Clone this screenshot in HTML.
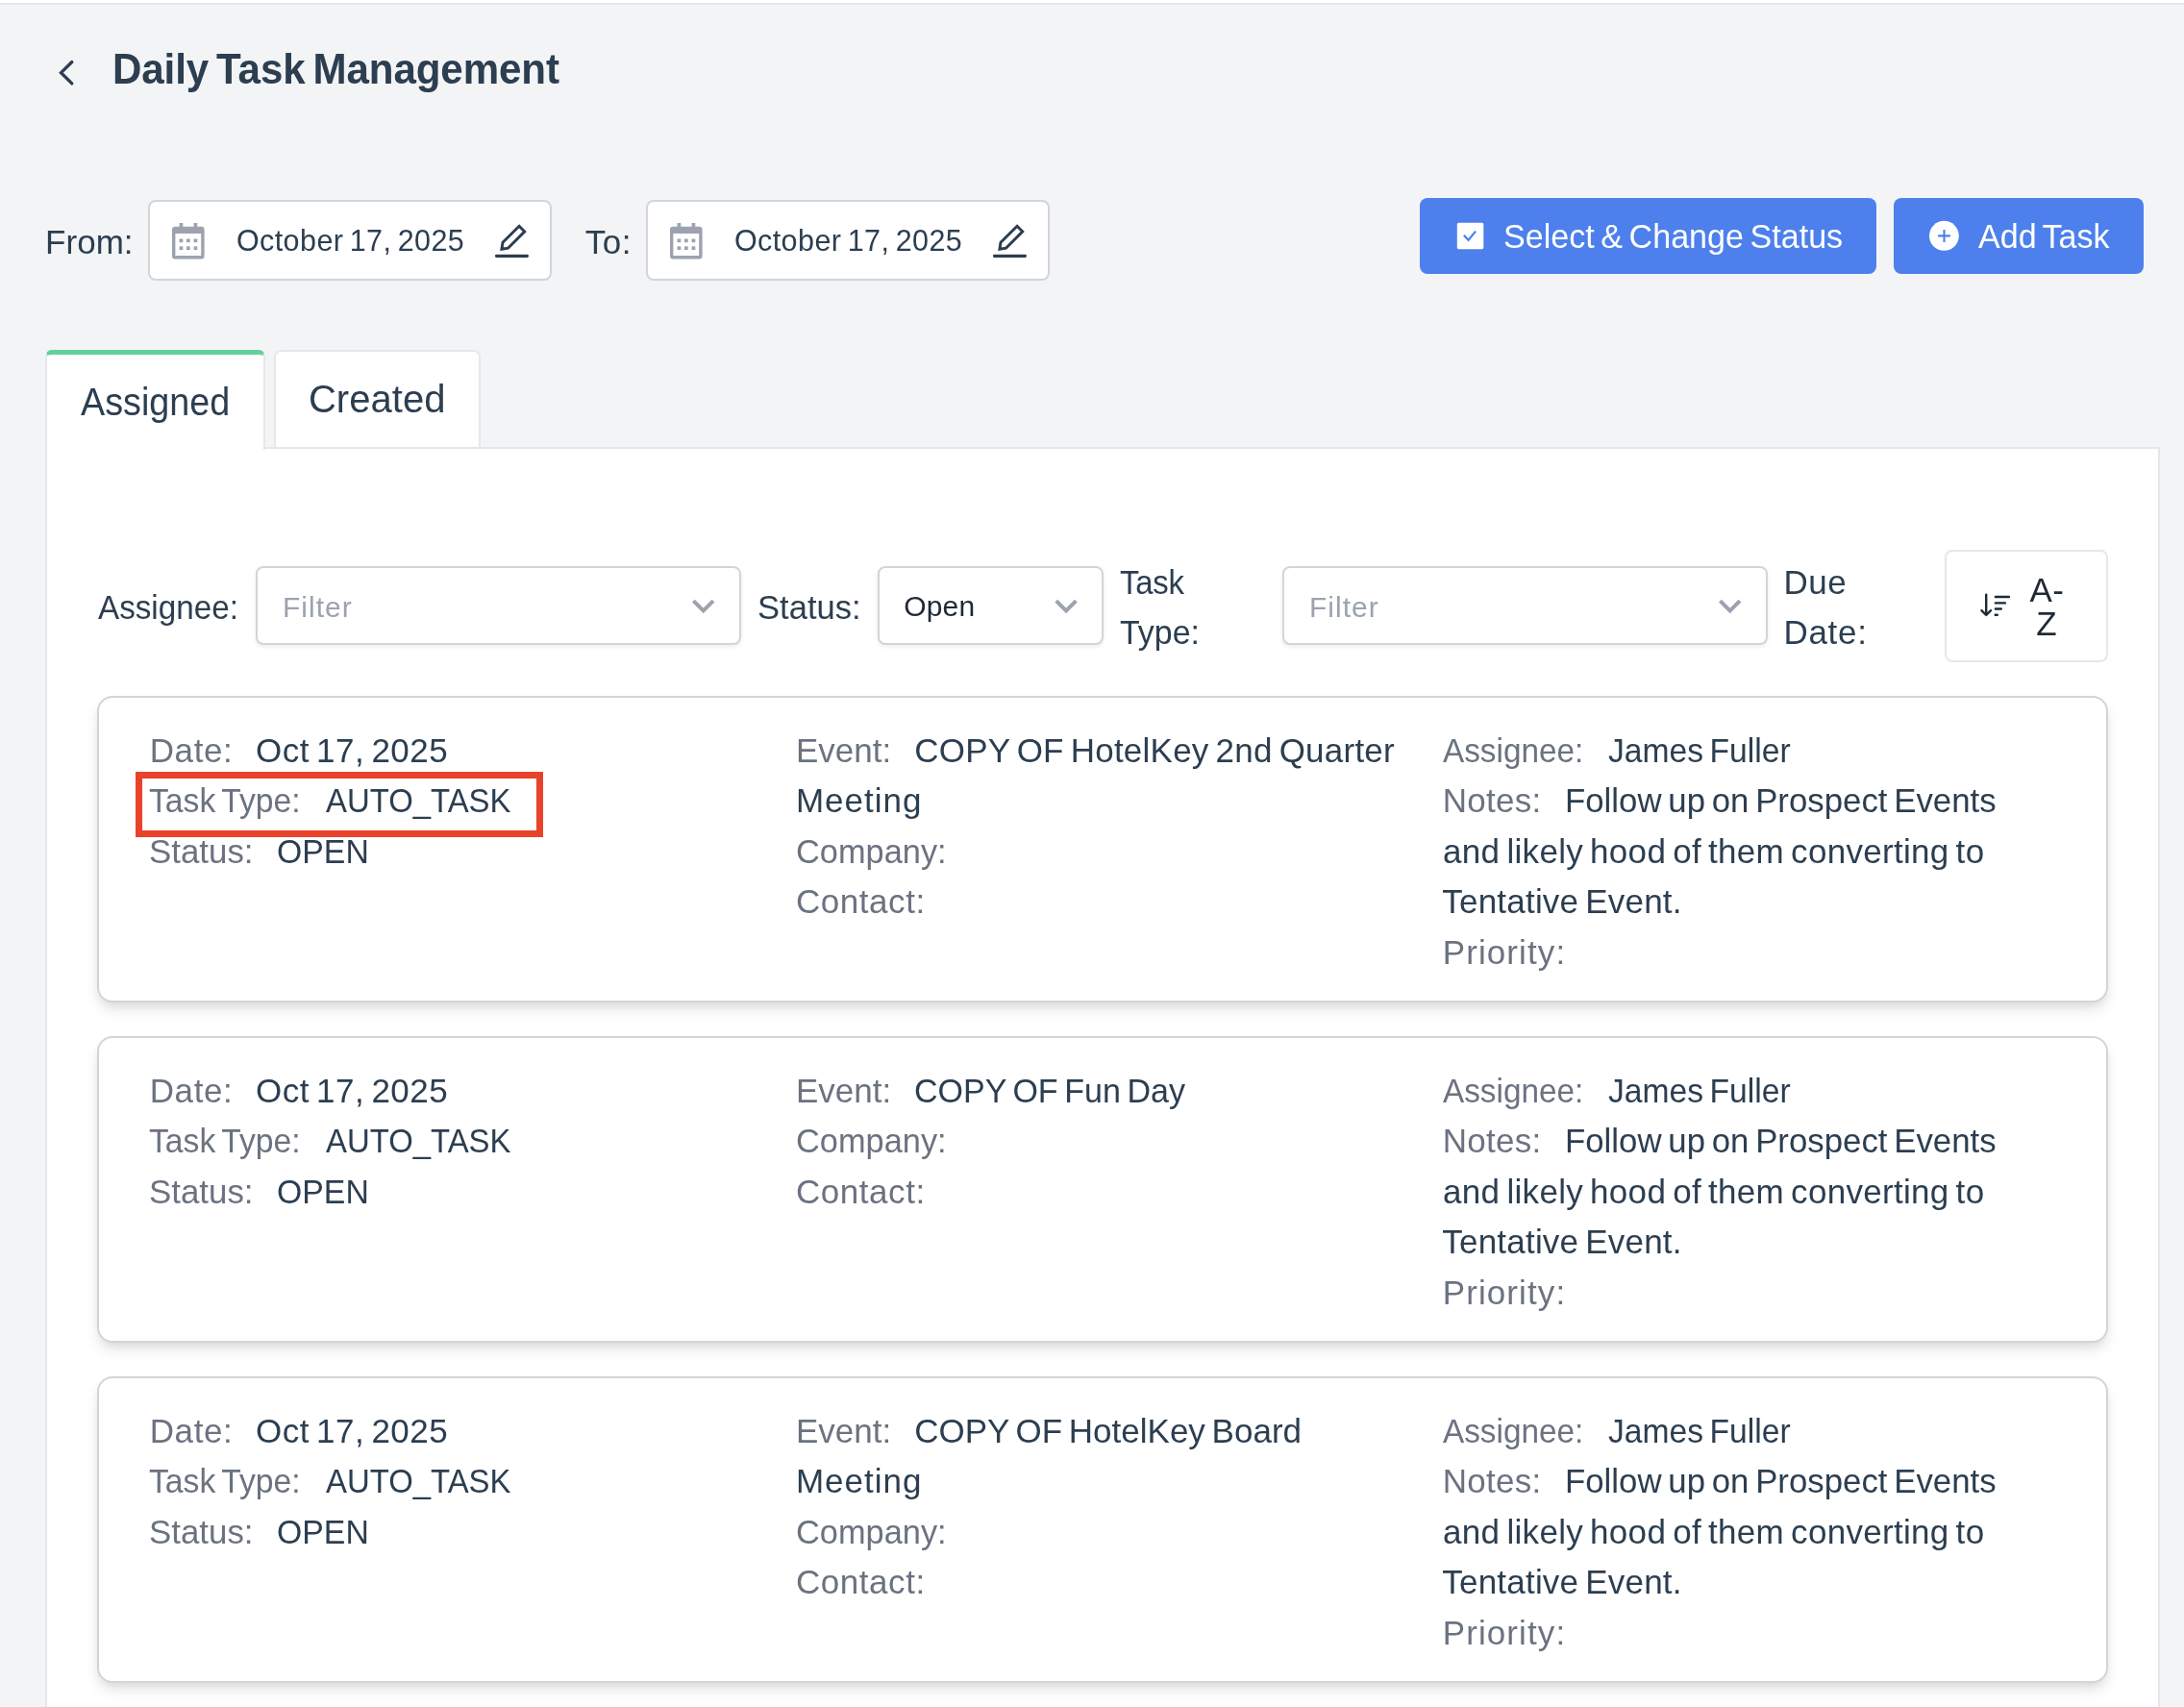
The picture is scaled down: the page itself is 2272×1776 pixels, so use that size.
<!DOCTYPE html>
<html lang="en"><head><meta charset="utf-8"><title>Daily Task Management</title>
<style>
html,body{margin:0;padding:0;overflow:hidden}
body{width:2272px;height:1776px;position:relative;overflow:hidden;background:#f3f4f6;font-family:"Liberation Sans", sans-serif;}
.t{position:absolute;white-space:pre;line-height:1;transform-origin:0 0;word-spacing:-0.085em;font-weight:400}
.abs{position:absolute;box-sizing:border-box}
.box{position:absolute;box-sizing:border-box;background:#fff;border:2px solid #d1d5db;border-radius:8px}
.dd{box-shadow:0 2px 4px rgba(16,24,40,.08)}
.btn{position:absolute;background:#4d80ec;border-radius:8px}
.card{position:absolute;box-sizing:border-box;left:101px;width:2092px;height:319px;background:#fff;border:2px solid #d1d5db;border-radius:16px;box-shadow:0 9px 15px -2px rgba(0,0,0,.11),0 4px 8px -2px rgba(0,0,0,.06)}
svg{position:absolute;overflow:visible}
</style></head><body>

<div class="abs" style="left:0;top:0;width:2272px;height:3px;background:#fff"></div>
<div class="abs" style="left:0;top:3px;width:2272px;height:2px;background:#e4e6e9"></div>
<svg style="left:0;top:0" width="2272" height="120"><path d="M74.8 64.5 L63.5 75.7 L74.8 86.9" fill="none" stroke="#2c3e50" stroke-width="3.3" stroke-linecap="round" stroke-linejoin="miter"/></svg>
<div class="box" style="left:154px;top:208px;width:420px;height:84px"></div>
<div class="box" style="left:672px;top:208px;width:420px;height:84px"></div>
<svg style="left:179.0px;top:231.8px" width="34" height="38" viewBox="0 0 34 38"><path fill="#9ca3af" fill-rule="evenodd" d="M3.2 3.8 H30.4 A3.2 3.2 0 0 1 33.6 7 V34.2 A3.2 3.2 0 0 1 30.4 37.4 H3.2 A3.2 3.2 0 0 1 0 34.2 V7 A3.2 3.2 0 0 1 3.2 3.8 Z M3.4 11 V34 H30.2 V11 Z"/><rect x="7.6" y="0" width="3.7" height="5" fill="#9ca3af"/><rect x="22.6" y="0" width="3.7" height="5" fill="#9ca3af"/><rect x="7.6" y="16.5" width="3.7" height="3.7" fill="#9ca3af"/><rect x="7.6" y="24.3" width="3.7" height="3.7" fill="#9ca3af"/><rect x="15.0" y="16.5" width="3.7" height="3.7" fill="#9ca3af"/><rect x="15.0" y="24.3" width="3.7" height="3.7" fill="#9ca3af"/><rect x="22.6" y="16.5" width="3.7" height="3.7" fill="#9ca3af"/><rect x="22.6" y="24.3" width="3.7" height="3.7" fill="#9ca3af"/></svg>
<svg style="left:697.0px;top:231.8px" width="34" height="38" viewBox="0 0 34 38"><path fill="#9ca3af" fill-rule="evenodd" d="M3.2 3.8 H30.4 A3.2 3.2 0 0 1 33.6 7 V34.2 A3.2 3.2 0 0 1 30.4 37.4 H3.2 A3.2 3.2 0 0 1 0 34.2 V7 A3.2 3.2 0 0 1 3.2 3.8 Z M3.4 11 V34 H30.2 V11 Z"/><rect x="7.6" y="0" width="3.7" height="5" fill="#9ca3af"/><rect x="22.6" y="0" width="3.7" height="5" fill="#9ca3af"/><rect x="7.6" y="16.5" width="3.7" height="3.7" fill="#9ca3af"/><rect x="7.6" y="24.3" width="3.7" height="3.7" fill="#9ca3af"/><rect x="15.0" y="16.5" width="3.7" height="3.7" fill="#9ca3af"/><rect x="15.0" y="24.3" width="3.7" height="3.7" fill="#9ca3af"/><rect x="22.6" y="16.5" width="3.7" height="3.7" fill="#9ca3af"/><rect x="22.6" y="24.3" width="3.7" height="3.7" fill="#9ca3af"/></svg>
<svg style="left:0px;top:0" width="10" height="10"><path d="M540.1 235.2 L545.8 240.9 L528.6 258.1 L521.9 259.2 L523.0 252.3 Z" fill="none" stroke="#2c3e50" stroke-width="2.9" stroke-linejoin="miter" stroke-miterlimit="3"/><rect x="515.0" y="264.7" width="34.9" height="3.2" rx="1.3" fill="#2c3e50"/></svg>
<svg style="left:518px;top:0" width="10" height="10"><path d="M540.1 235.2 L545.8 240.9 L528.6 258.1 L521.9 259.2 L523.0 252.3 Z" fill="none" stroke="#2c3e50" stroke-width="2.9" stroke-linejoin="miter" stroke-miterlimit="3"/><rect x="515.0" y="264.7" width="34.9" height="3.2" rx="1.3" fill="#2c3e50"/></svg>
<div class="btn" style="left:1477px;top:206px;width:475px;height:79px"></div>
<div class="btn" style="left:1970px;top:206px;width:260px;height:79px"></div>
<svg style="left:0;top:0" width="10" height="10"><rect x="1515.8" y="231.7" width="27.5" height="27.5" rx="1.8" fill="#fff"/><path d="M1522.9 244.8 L1527.5 249.8 L1535.1 240.6" fill="none" stroke="#4d80ec" stroke-width="2.2" stroke-linejoin="miter"/><circle cx="2022.4" cy="245.3" r="15.45" fill="#fff"/><path d="M2016.1 245.4 H2028.9 M2022.5 239 V251.9" fill="none" stroke="#4d80ec" stroke-width="2.1"/></svg>
<div class="abs" style="left:47px;top:465px;width:2200px;height:1311px;background:#fff;border:2px solid #e5e7eb;border-bottom:none"></div>
<div class="abs" style="left:47px;top:364px;width:229px;height:104px;background:#fff;border-left:2px solid #e5e7eb;border-right:2px solid #e5e7eb;border-top:5px solid #66cf9b;border-radius:7px 7px 0 0"></div>
<div class="abs" style="left:285px;top:364px;width:214.5px;height:101px;background:#fff;border:2px solid #e5e7eb;border-bottom:none;border-radius:7px 7px 0 0"></div>
<div class="box dd" style="left:265.5px;top:589px;width:505px;height:82px"></div>
<svg style="left:0;top:0" width="10" height="10"><path d="M721.4000000000001 625.2 L731.7 635.4 L742.0 625.2" fill="none" stroke="#9ca3af" stroke-width="4"/></svg>
<div class="box dd" style="left:912.5px;top:589px;width:235px;height:82px"></div>
<svg style="left:0;top:0" width="10" height="10"><path d="M1098.8 625.2 L1109.1 635.4 L1119.3999999999999 625.2" fill="none" stroke="#9ca3af" stroke-width="4"/></svg>
<div class="box dd" style="left:1333.5px;top:589px;width:505px;height:82px"></div>
<svg style="left:0;top:0" width="10" height="10"><path d="M1789.4 625.2 L1799.7 635.4 L1810.0 625.2" fill="none" stroke="#9ca3af" stroke-width="4"/></svg>
<div class="abs" style="left:2023px;top:572px;width:170px;height:117px;background:#fff;border:2px solid #e5e7eb;border-radius:8px"></div>
<svg style="left:0;top:0" width="10" height="10"><g fill="none" stroke="#1f2937" stroke-width="2.4" stroke-linecap="round" stroke-linejoin="round"><path d="M2066.2 618.6 V639.8 M2061.4 635.2 L2066.2 640 L2071 635.2"/><path d="M2075.9 621 H2089.9 M2075.9 627.4 H2085.9 M2075.9 633.5 H2081.8 M2075.7 639.8 H2077.8"/></g></svg>
<div class="card" style="top:724px"></div>
<div class="card" style="top:1078px"></div>
<div class="card" style="top:1432px"></div>
<div class="abs" style="left:140.5px;top:802.5px;width:424px;height:68px;border:7px solid #e8432a"></div>
<div class="abs" style="left:0;top:0;width:2272px;height:1776px;will-change:transform">
<span class="t" style="left:117.28px;top:49px;font-size:44.8px;color:#2c3e50;letter-spacing:-0.118px;transform:scaleX(0.9400);font-weight:700">Daily Task Management</span>
<span class="t" style="left:47.10px;top:234px;font-size:35.0px;color:#2c3e50;letter-spacing:0.025px">From:</span>
<span class="t" style="left:245.90px;top:235px;font-size:30.5px;color:#2c3e50;letter-spacing:0.427px">October 17, 2025</span>
<span class="t" style="left:608.80px;top:234px;font-size:35.0px;color:#2c3e50;letter-spacing:0.450px">To:</span>
<span class="t" style="left:763.90px;top:235px;font-size:30.5px;color:#2c3e50;letter-spacing:0.427px">October 17, 2025</span>
<span class="t" style="left:1563.85px;top:228px;font-size:35.0px;color:#fff;transform:scaleX(0.9736)">Select &amp; Change Status</span>
<span class="t" style="left:2057.50px;top:228px;font-size:35.0px;color:#fff;transform:scaleX(0.9729)">Add Task</span>
<span class="t" style="left:84.40px;top:398px;font-size:40.0px;color:#2c3e50;transform:scaleX(0.9438)">Assigned</span>
<span class="t" style="left:320.90px;top:395px;font-size:40.0px;color:#2c3e50;letter-spacing:0.067px">Created</span>
<span class="t" style="left:102.00px;top:614px;font-size:35.0px;color:#2c3e50;transform:scaleX(0.9490)">Assignee:</span>
<span class="t" style="left:294.00px;top:617px;font-size:30.0px;color:#9ca3af;letter-spacing:1.020px">Filter</span>
<span class="t" style="left:787.62px;top:614px;font-size:35.0px;color:#2c3e50;transform:scaleX(0.9885)">Status:</span>
<span class="t" style="left:940.30px;top:616px;font-size:30.0px;color:#1f2937;letter-spacing:0.133px">Open</span>
<span class="t" style="left:1164.86px;top:588px;font-size:35.0px;color:#2c3e50;letter-spacing:-0.262px;transform:scaleX(0.9400)">Task</span>
<span class="t" style="left:1164.83px;top:640px;font-size:35.0px;color:#2c3e50;transform:scaleX(0.9695)">Type:</span>
<span class="t" style="left:1362.00px;top:617px;font-size:30.0px;color:#9ca3af;letter-spacing:1.020px">Filter</span>
<span class="t" style="left:1855.50px;top:588px;font-size:35.0px;color:#2c3e50;letter-spacing:0.500px">Due</span>
<span class="t" style="left:1855.50px;top:640px;font-size:35.0px;color:#2c3e50;letter-spacing:0.675px">Date:</span>
<span class="t" style="left:2111.40px;top:596px;font-size:35.0px;color:#1f2937;letter-spacing:0.400px">A-</span>
<span class="t" style="left:2118.30px;top:631px;font-size:35.0px;color:#1f2937">Z</span>
<span class="t" style="left:155.70px;top:763px;font-size:35.0px;color:#6b7280;letter-spacing:0.625px">Date:</span>
<span class="t" style="left:266.00px;top:763px;font-size:35.0px;color:#2c3e50;letter-spacing:0.473px">Oct 17, 2025</span>
<span class="t" style="left:155.14px;top:815px;font-size:35.0px;color:#6b7280;transform:scaleX(0.9631)">Task Type:</span>
<span class="t" style="left:339.20px;top:815px;font-size:35.0px;color:#2c3e50;letter-spacing:-0.021px;transform:scaleX(0.9400)">AUTO_TASK</span>
<span class="t" style="left:155.11px;top:868px;font-size:35.0px;color:#6b7280;transform:scaleX(0.9962)">Status:</span>
<span class="t" style="left:287.67px;top:868px;font-size:35.0px;color:#2c3e50;transform:scaleX(0.9663)">OPEN</span>
<span class="t" style="left:827.90px;top:763px;font-size:35.0px;color:#6b7280;transform:scaleX(0.9989)">Event:</span>
<span class="t" style="left:951.20px;top:763px;font-size:35.0px;color:#2c3e50;letter-spacing:0.233px">COPY OF HotelKey 2nd Quarter</span>
<span class="t" style="left:827.90px;top:815px;font-size:35.0px;color:#2c3e50;letter-spacing:1.000px">Meeting</span>
<span class="t" style="left:827.94px;top:868px;font-size:35.0px;color:#6b7280;transform:scaleX(0.9818)">Company:</span>
<span class="t" style="left:827.90px;top:920px;font-size:35.0px;color:#6b7280;letter-spacing:0.557px">Contact:</span>
<span class="t" style="left:1500.80px;top:763px;font-size:35.0px;color:#6b7280;transform:scaleX(0.9517)">Assignee:</span>
<span class="t" style="left:1673.14px;top:763px;font-size:35.0px;color:#2c3e50;transform:scaleX(0.9607)">James Fuller</span>
<span class="t" style="left:1500.70px;top:815px;font-size:35.0px;color:#6b7280;letter-spacing:0.300px">Notes:</span>
<span class="t" style="left:1627.62px;top:815px;font-size:35.0px;color:#2c3e50;transform:scaleX(0.9944)">Follow up on Prospect Events</span>
<span class="t" style="left:1501.10px;top:868px;font-size:35.0px;color:#2c3e50;letter-spacing:0.300px">and likely hood of them converting to</span>
<span class="t" style="left:1500.30px;top:920px;font-size:35.0px;color:#2c3e50;letter-spacing:0.207px">Tentative Event.</span>
<span class="t" style="left:1500.70px;top:973px;font-size:35.0px;color:#6b7280;letter-spacing:1.100px">Priority:</span>
<span class="t" style="left:155.70px;top:1117px;font-size:35.0px;color:#6b7280;letter-spacing:0.625px">Date:</span>
<span class="t" style="left:266.00px;top:1117px;font-size:35.0px;color:#2c3e50;letter-spacing:0.473px">Oct 17, 2025</span>
<span class="t" style="left:155.14px;top:1169px;font-size:35.0px;color:#6b7280;transform:scaleX(0.9631)">Task Type:</span>
<span class="t" style="left:339.20px;top:1169px;font-size:35.0px;color:#2c3e50;letter-spacing:-0.021px;transform:scaleX(0.9400)">AUTO_TASK</span>
<span class="t" style="left:155.11px;top:1222px;font-size:35.0px;color:#6b7280;transform:scaleX(0.9962)">Status:</span>
<span class="t" style="left:287.67px;top:1222px;font-size:35.0px;color:#2c3e50;transform:scaleX(0.9663)">OPEN</span>
<span class="t" style="left:827.90px;top:1117px;font-size:35.0px;color:#6b7280;transform:scaleX(0.9989)">Event:</span>
<span class="t" style="left:951.26px;top:1117px;font-size:35.0px;color:#2c3e50;transform:scaleX(0.9722)">COPY OF Fun Day</span>
<span class="t" style="left:827.94px;top:1169px;font-size:35.0px;color:#6b7280;transform:scaleX(0.9818)">Company:</span>
<span class="t" style="left:827.90px;top:1222px;font-size:35.0px;color:#6b7280;letter-spacing:0.557px">Contact:</span>
<span class="t" style="left:1500.80px;top:1117px;font-size:35.0px;color:#6b7280;transform:scaleX(0.9517)">Assignee:</span>
<span class="t" style="left:1673.14px;top:1117px;font-size:35.0px;color:#2c3e50;transform:scaleX(0.9607)">James Fuller</span>
<span class="t" style="left:1500.70px;top:1169px;font-size:35.0px;color:#6b7280;letter-spacing:0.300px">Notes:</span>
<span class="t" style="left:1627.62px;top:1169px;font-size:35.0px;color:#2c3e50;transform:scaleX(0.9944)">Follow up on Prospect Events</span>
<span class="t" style="left:1501.10px;top:1222px;font-size:35.0px;color:#2c3e50;letter-spacing:0.300px">and likely hood of them converting to</span>
<span class="t" style="left:1500.30px;top:1274px;font-size:35.0px;color:#2c3e50;letter-spacing:0.207px">Tentative Event.</span>
<span class="t" style="left:1500.70px;top:1327px;font-size:35.0px;color:#6b7280;letter-spacing:1.100px">Priority:</span>
<span class="t" style="left:155.70px;top:1471px;font-size:35.0px;color:#6b7280;letter-spacing:0.625px">Date:</span>
<span class="t" style="left:266.00px;top:1471px;font-size:35.0px;color:#2c3e50;letter-spacing:0.473px">Oct 17, 2025</span>
<span class="t" style="left:155.14px;top:1523px;font-size:35.0px;color:#6b7280;transform:scaleX(0.9631)">Task Type:</span>
<span class="t" style="left:339.20px;top:1523px;font-size:35.0px;color:#2c3e50;letter-spacing:-0.021px;transform:scaleX(0.9400)">AUTO_TASK</span>
<span class="t" style="left:155.11px;top:1576px;font-size:35.0px;color:#6b7280;transform:scaleX(0.9962)">Status:</span>
<span class="t" style="left:287.67px;top:1576px;font-size:35.0px;color:#2c3e50;transform:scaleX(0.9663)">OPEN</span>
<span class="t" style="left:827.90px;top:1471px;font-size:35.0px;color:#6b7280;transform:scaleX(0.9989)">Event:</span>
<span class="t" style="left:951.20px;top:1471px;font-size:35.0px;color:#2c3e50">COPY OF HotelKey Board</span>
<span class="t" style="left:827.90px;top:1523px;font-size:35.0px;color:#2c3e50;letter-spacing:1.000px">Meeting</span>
<span class="t" style="left:827.94px;top:1576px;font-size:35.0px;color:#6b7280;transform:scaleX(0.9818)">Company:</span>
<span class="t" style="left:827.90px;top:1628px;font-size:35.0px;color:#6b7280;letter-spacing:0.557px">Contact:</span>
<span class="t" style="left:1500.80px;top:1471px;font-size:35.0px;color:#6b7280;transform:scaleX(0.9517)">Assignee:</span>
<span class="t" style="left:1673.14px;top:1471px;font-size:35.0px;color:#2c3e50;transform:scaleX(0.9607)">James Fuller</span>
<span class="t" style="left:1500.70px;top:1523px;font-size:35.0px;color:#6b7280;letter-spacing:0.300px">Notes:</span>
<span class="t" style="left:1627.62px;top:1523px;font-size:35.0px;color:#2c3e50;transform:scaleX(0.9944)">Follow up on Prospect Events</span>
<span class="t" style="left:1501.10px;top:1576px;font-size:35.0px;color:#2c3e50;letter-spacing:0.300px">and likely hood of them converting to</span>
<span class="t" style="left:1500.30px;top:1628px;font-size:35.0px;color:#2c3e50;letter-spacing:0.207px">Tentative Event.</span>
<span class="t" style="left:1500.70px;top:1681px;font-size:35.0px;color:#6b7280;letter-spacing:1.100px">Priority:</span>
</div>
</body></html>
